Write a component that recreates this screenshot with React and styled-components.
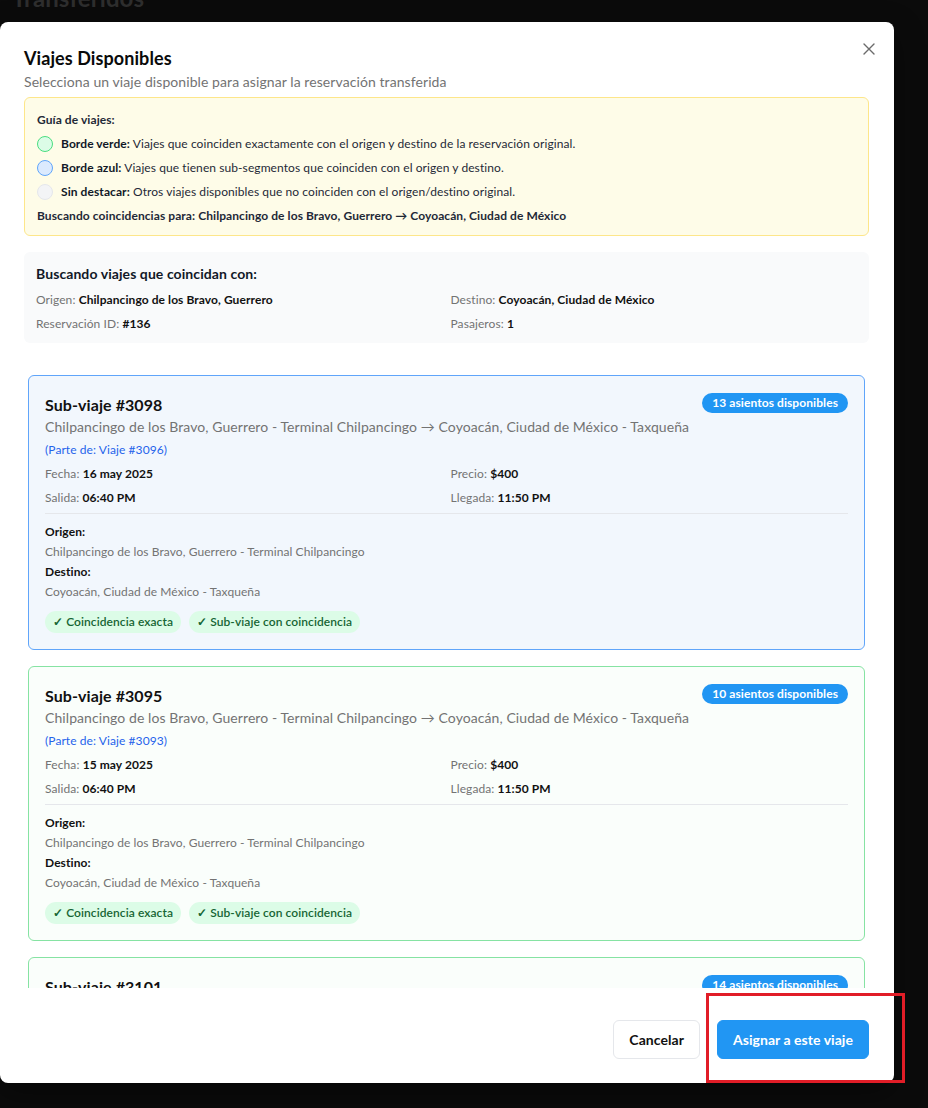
import React from "react";
import styled, { createGlobalStyle } from "styled-components";

const Global = createGlobalStyle`
  html, body { margin: 0; padding: 0; background: #0b0b0b; }
  body { font-family: Lato, "Noto Sans", "Liberation Sans", sans-serif; color: #111827; letter-spacing: 0.08px; }
  * { box-sizing: border-box; }
`;

const Page = styled.div`
  position: relative;
  width: 928px;
  height: 1108px;
  overflow: hidden;
`;

const BackTitle = styled.div`
  margin: -17px 0 0 12px;
  font-size: 24px;
  font-weight: 700;
  color: #2e2e2e;
`;

const Dialog = styled.div`
  position: absolute;
  left: 0;
  top: 22px;
  width: 894px;
  height: 1061px;
  background: #fff;
  border-radius: 8px;
  box-shadow: 0 10px 30px rgba(0,0,0,0.4);
  padding: 24px 25px 24px 24px;
  display: flex;
  flex-direction: column;
`;

const Close = styled.button`
  position: absolute;
  right: 17px;
  top: 19px;
  width: 16px;
  height: 16px;
  padding: 0;
  border: 0;
  background: none;
  display: flex;
  align-items: center;
  justify-content: center;
  color: #6b6b6b;
`;

const Title = styled.h2`
  margin: 0;
  font-size: 18px;
  line-height: 24px;
  font-weight: 700;
  color: #0a0a0a;
`;

const Subtitle = styled.p`
  margin: 2px 0 0;
  font-size: 14px;
  line-height: 20px;
  color: #737373;
`;

const Guide = styled.div`
  margin-top: 5px;
  background: #fefce8;
  border: 1px solid #fde68a;
  border-radius: 6px;
  padding: 12px 12px 9px;
  display: flex;
  flex-direction: column;
  gap: 4px;
  font-size: 12px;
  color: #1f2937;
`;

const GuideRow = styled.div`
  display: flex;
  align-items: center;
  gap: 8px;
  line-height: 20px;
  font-weight: ${(p) => (p.$strong ? 700 : 400)};
`;

const Dot = styled.span`
  width: 16px;
  height: 16px;
  border-radius: 50%;
  flex: none;
  background: ${(p) => p.$bg};
  border: 1px solid ${(p) => p.$border};
`;

const B = styled.b`
  font-weight: 700;
  color: #111827;
`;

const SearchBox = styled.div`
  margin-top: 16px;
  background: #f9fafb;
  border-radius: 6px;
  padding: 12px 12px 9px;
`;

const SearchTitle = styled.div`
  font-size: 14px;
  line-height: 20px;
  font-weight: 700;
  margin-bottom: 6px;
  color: #111827;
`;

const TwoCol = styled.div`
  display: grid;
  grid-template-columns: 1fr 1fr;
  column-gap: 8px;
  row-gap: 4px;
  font-size: 12px;
  line-height: 20px;
`;

const Label = styled.span`
  color: #737373;
`;

const Val = styled.span`
  color: #111;
  font-weight: 700;
`;

const Scroll = styled.div`
  margin-top: 16px;
  flex: 1;
  overflow: hidden;
  padding: 16px 4px;
  display: flex;
  flex-direction: column;
  gap: 16px;
`;

const Card = styled.div`
  flex: none;
  border: 1px solid ${(p) => (p.$kind === "blue" ? "#60a5fa" : "#86e3a3")};
  background: ${(p) => (p.$kind === "blue" ? "#f2f7fd" : "#fafefb")};
  border-radius: 6px;
  padding: 17px 16px 16px;
`;

const CardHead = styled.div`
  display: flex;
  justify-content: space-between;
  align-items: flex-start;
`;

const CardTitle = styled.div`
  font-size: 16px;
  line-height: 24px;
  font-weight: 700;
  color: #111;
`;

const Seats = styled.span`
  background: #2196f3;
  color: #fff;
  font-size: 12px;
  font-weight: 700;
  line-height: 20px;
  padding: 0 10px;
  border-radius: 999px;
`;

const Route = styled.div`
  font-size: 14px;
  line-height: 20px;
  color: #737373;
`;

const Parent = styled.div`
  margin-top: 5px;
  font-size: 12px;
  line-height: 16px;
  color: #2563eb;
`;

const CardGrid = styled(TwoCol)`
  margin-top: 6px;
`;

const Divider = styled.div`
  margin-top: 5px;
  border-top: 1px solid #e5e7eb;
  padding-top: 8px;
  font-size: 12px;
  line-height: 20px;
`;

const StopLabel = styled.div`
  font-weight: 700;
  color: #111;
`;

const StopValue = styled.div`
  color: #737373;
`;

const Tags = styled.div`
  margin-top: 9px;
  display: flex;
  gap: 8px;
`;

const Tag = styled.span`
  background: #dcfce7;
  color: #166534;
  font-size: 12px;
  font-weight: 600;
  line-height: 22px;
  padding: 0 8px;
  border-radius: 999px;
`;

const Footer = styled.div`
  padding-top: 32px;
  display: flex;
  justify-content: flex-end;
  gap: 17px;
`;

const Btn = styled.button`
  height: 39px;
  padding: 0 15px;
  border-radius: 6px;
  font-family: inherit;
  font-size: 14px;
  font-weight: 700;
  letter-spacing: 0.05px;
  border: 1px solid ${(p) => (p.$primary ? "#2196f3" : "#e5e7eb")};
  background: ${(p) => (p.$primary ? "#2196f3" : "#fff")};
  color: ${(p) => (p.$primary ? "#fff" : "#111")};
`;

const Highlight = styled.div`
  position: absolute;
  left: 706px;
  top: 993px;
  width: 199px;
  height: 90px;
  border: 3px solid #e11d27;
  pointer-events: none;
`;

const trips = [
  { id: 3098, parent: 3096, seats: 13, date: "16 may 2025", kind: "blue" },
  { id: 3095, parent: 3093, seats: 10, date: "15 may 2025", kind: "green" },
  { id: 3101, parent: 3099, seats: 14, date: "17 may 2025", kind: "green" },
];

const ORIG = "Chilpancingo de los Bravo, Guerrero - Terminal Chilpancingo";
const DEST = "Coyoacán, Ciudad de México - Taxqueña";

function TripCard({ t }) {
  return (
    <Card $kind={t.kind}>
      <CardHead>
        <CardTitle>Sub-viaje #{t.id}</CardTitle>
        <Seats>{t.seats} asientos disponibles</Seats>
      </CardHead>
      <Route>
        {ORIG} → {DEST}
      </Route>
      <Parent>(Parte de: Viaje #{t.parent})</Parent>
      <CardGrid>
        <div>
          <Label>Fecha: </Label>
          <Val>{t.date}</Val>
        </div>
        <div>
          <Label>Precio: </Label>
          <Val>$400</Val>
        </div>
        <div>
          <Label>Salida: </Label>
          <Val>06:40 PM</Val>
        </div>
        <div>
          <Label>Llegada: </Label>
          <Val>11:50 PM</Val>
        </div>
      </CardGrid>
      <Divider>
        <StopLabel>Origen:</StopLabel>
        <StopValue>{ORIG}</StopValue>
        <StopLabel>Destino:</StopLabel>
        <StopValue>{DEST}</StopValue>
      </Divider>
      <Tags>
        <Tag>✓ Coincidencia exacta</Tag>
        <Tag>✓ Sub-viaje con coincidencia</Tag>
      </Tags>
    </Card>
  );
}

export default function App() {
  return (
    <Page>
      <Global />
      <BackTitle>Transferidos</BackTitle>
      <Dialog>
        <Close aria-label="Cerrar">
          <svg width="12" height="12" viewBox="0 0 12 12" fill="none" stroke="currentColor" strokeWidth="1.4" strokeLinecap="round">
            <path d="M1 1L11 11M11 1L1 11" />
          </svg>
        </Close>
        <Title>Viajes Disponibles</Title>
        <Subtitle>Selecciona un viaje disponible para asignar la reservación transferida</Subtitle>

        <Guide>
          <GuideRow $strong>Guía de viajes:</GuideRow>
          <GuideRow>
            <Dot $bg="#dcfce7" $border="#4ade80" />
            <span>
              <B>Borde verde:</B> Viajes que coinciden exactamente con el origen y destino de la reservación original.
            </span>
          </GuideRow>
          <GuideRow>
            <Dot $bg="#dbeafe" $border="#60a5fa" />
            <span>
              <B>Borde azul:</B> Viajes que tienen sub-segmentos que coinciden con el origen y destino.
            </span>
          </GuideRow>
          <GuideRow>
            <Dot $bg="#f3f4f6" $border="#e5e7eb" />
            <span>
              <B>Sin destacar:</B> Otros viajes disponibles que no coinciden con el origen/destino original.
            </span>
          </GuideRow>
          <GuideRow $strong>
            Buscando coincidencias para: Chilpancingo de los Bravo, Guerrero → Coyoacán, Ciudad de México
          </GuideRow>
        </Guide>

        <SearchBox>
          <SearchTitle>Buscando viajes que coincidan con:</SearchTitle>
          <TwoCol>
            <div>
              <Label>Origen: </Label>
              <Val>Chilpancingo de los Bravo, Guerrero</Val>
            </div>
            <div>
              <Label>Destino: </Label>
              <Val>Coyoacán, Ciudad de México</Val>
            </div>
            <div>
              <Label>Reservación ID: </Label>
              <Val>#136</Val>
            </div>
            <div>
              <Label>Pasajeros: </Label>
              <Val>1</Val>
            </div>
          </TwoCol>
        </SearchBox>

        <Scroll>
          {trips.map((t) => (
            <TripCard key={t.id} t={t} />
          ))}
        </Scroll>

        <Footer>
          <Btn>Cancelar</Btn>
          <Btn $primary>Asignar a este viaje</Btn>
        </Footer>
      </Dialog>
      <Highlight />
    </Page>
  );
}
